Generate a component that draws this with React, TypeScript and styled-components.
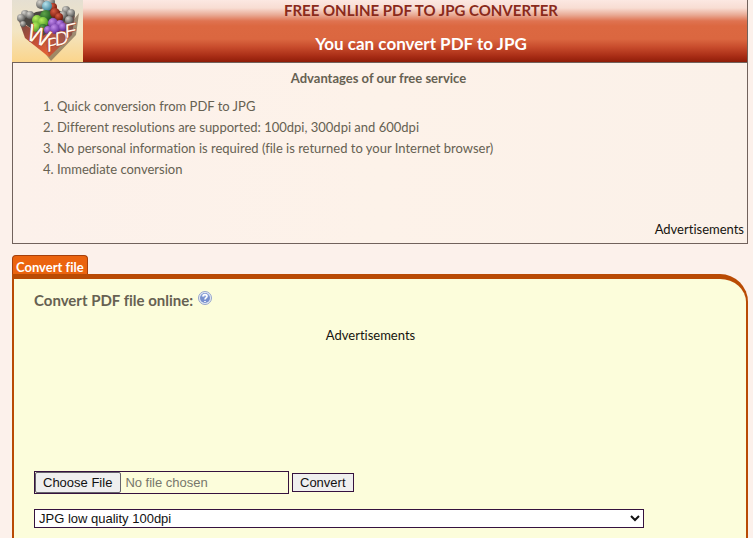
import React from "react";
import styled, { createGlobalStyle } from "styled-components";

const humanist = `"Trebuchet MS", Lato, "Noto Sans", sans-serif`;
const plain = `Arial, "Liberation Sans", sans-serif`;

const GlobalStyle = createGlobalStyle`
  * { box-sizing: border-box; }
  body {
    margin: 0;
    background: #fcf1eb;
    color: #666152;
    font: 13px/20px ${humanist};
    font-variant-ligatures: none;
  }
`;

const Page = styled.div`
  display: flex;
  flex-direction: column;
  min-height: 100vh;
  padding: 0 5px 0 12px;
`;

const Intro = styled.section`
  height: 244px;
  display: flex;
  flex-direction: column;
  background: linear-gradient(90deg, #fcf1eb, #fdf2e9 50%, #fbf1e9);
  border-right: 1px solid #71625c;
  border-bottom: 1px solid #71625c;
`;

const Banner = styled.header`
  display: grid;
  grid-template-columns: 71px 1fr;
  height: 63px;
  border-bottom: 1px solid #71625c;
`;

const LogoLink = styled.a`
  display: block;
  height: 62px;
  overflow: hidden;
`;

const Titles = styled.div`
  text-align: center;
  background: linear-gradient(
    #fce8e2 0px, #f8ddd3 8px, #e9aa95 15px, #df7351 21px,
    #dc6841 26px, #db6740 39px, #c84c2c 47px, #a92d16 56px, #8f1d08 62px
  );
`;

const Title = styled.h1`
  margin: 0;
  padding-left: 12px;
  color: #8a2a1b;
  font-size: 15px;
  font-weight: 700;
  line-height: 20px;
`;

const Subtitle = styled.h2`
  margin: 0;
  padding: 14px 0 0 12px;
  color: #fff;
  font-size: 17px;
  font-weight: 700;
  line-height: 20px;
`;

const Benefits = styled.div`
  flex: 1;
  display: flex;
  flex-direction: column;
  padding: 5px 3px 4px 0;
  border-left: 1px solid #71625c;
`;

const BenefitsTitle = styled.h3`
  margin: 0;
  font-size: 13px;
  font-weight: 700;
  line-height: 20px;
  text-align: center;
`;

const BenefitsList = styled.ol`
  margin: 8px 0 0;
  padding-left: 44px;
  line-height: 21px;
`;

const AdLabel = styled.div<{ $align: "right" | "center" }>`
  margin-top: ${(p) => (p.$align === "right" ? "auto" : "0")};
  color: #16140f;
  text-align: ${(p) => p.$align};
`;

const TabBar = styled.nav`
  display: flex;
  margin-top: 11px;
`;

const Tab = styled.a`
  height: 19px;
  padding: 0 3px;
  border: 1px solid #a5400c;
  border-bottom: 0;
  border-radius: 4px 4px 0 0;
  background: #eb640f;
  color: #fff;
  font-size: 13px;
  font-weight: 700;
  line-height: 22px;
  text-decoration: none;
`;

const Panel = styled.main`
  flex: 1;
  padding: 10px 19px 10px 20px;
  border: 2px solid #b94b04;
  border-top-width: 5px;
  border-bottom: 0;
  border-top-right-radius: 28px;
  background: #fcfddb;
`;

const FormTitle = styled.h3`
  display: flex;
  align-items: center;
  gap: 5px;
  margin: 0;
  font-size: 15px;
  font-weight: 700;
  line-height: 22px;
`;

const HelpButton = styled.button`
  display: flex;
  padding: 0 0 4px;
  border: 0;
  background: none;
`;

const AdSpace = styled.aside`
  height: 160px;
  padding: 14px 20px 0 0;
`;

const UploadRow = styled.div`
  display: flex;
  align-items: center;
  gap: 3px;
`;

const FileField = styled.input`
  width: 255px;
  height: 23px;
  border: 1px solid #35123f;
  color: #77776b;
  font: 13px/19px ${plain};

  &::file-selector-button {
    height: 21px;
    margin: 0 4px 0 0;
    padding: 0 8px 0 7px;
    border: 1px solid #66636b;
    border-radius: 2px;
    background: #efefef;
    color: #111;
    font: 13px/19px ${plain};
  }
`;

const ConvertButton = styled.button`
  height: 19px;
  padding: 0 7px;
  border: 1px solid #35123f;
  background: #efefef;
  color: #111;
  font: 13px/17px ${plain};
`;

const QualitySelect = styled.select`
  display: block;
  width: 91%;
  max-width: 610px;
  height: 19px;
  margin-top: 15px;
  padding: 0;
  border: 1px solid #35123f;
  border-radius: 0;
  background: #fff;
  color: #111;
  font: 13px/17px ${plain};
`;

type Ball = [x: number, y: number, r: number, hue: "grey" | "blue" | "green" | "lime" | "red" | "purple"];

const balls: Ball[] = [
  [13, 14, 4, "grey"], [9, 18, 4, "grey"], [18, 15, 4, "grey"], [11, 24, 3, "grey"],
  [29, 4, 5, "grey"], [38, 2, 5, "grey"], [41, 7, 4, "red"], [35, 6, 5, "blue"],
  [54, 10, 4, "grey"], [59, 13, 4, "grey"], [51, 15, 4, "grey"], [57, 20, 4, "grey"],
  [34, 16, 6, "green"], [43, 13, 5, "red"], [47, 17, 4, "red"],
  [25, 20, 5, "lime"], [31, 22, 5, "lime"], [24, 27, 5, "lime"], [31, 28, 4, "green"],
  [41, 23, 5, "purple"], [48, 24, 4, "purple"], [36, 30, 4, "purple"], [43, 29, 5, "purple"], [51, 27, 4, "purple"],
];

const hues = {
  grey: ["#d4d2cd", "#50504e"],
  blue: ["#b8e3ed", "#387f97"],
  green: ["#5da348", "#174d1c"],
  lime: ["#baf060", "#479522"],
  red: ["#d95b42", "#671407"],
  purple: ["#c18be9", "#5c2496"],
};

function Logo() {
  return (
    <svg width="71" height="62" viewBox="0 0 71 62" role="img" aria-label="WPDF">
      <defs>
        <linearGradient id="sky" x1="0" y1="0" x2="0" y2="1">
          <stop offset="0" stopColor="#e5dfd2" />
          <stop offset=".5" stopColor="#f3e5c3" />
          <stop offset="1" stopColor="#fbd58b" />
        </linearGradient>
        <linearGradient id="leftFace" x1="0" y1="0" x2="1" y2="1">
          <stop offset="0" stopColor="#684943" />
          <stop offset=".5" stopColor="#be4d38" />
          <stop offset="1" stopColor="#e66335" />
        </linearGradient>
        <linearGradient id="rightFace" x1="1" y1="0" x2="0" y2="1">
          <stop offset="0" stopColor="#624f4b" />
          <stop offset=".5" stopColor="#a65748" />
          <stop offset="1" stopColor="#dd5029" />
        </linearGradient>
        {Object.entries(hues).map(([name, [light, dark]]) => (
          <radialGradient key={name} id={name} cx=".35" cy=".3" r=".75">
            <stop offset="0" stopColor={light} />
            <stop offset="1" stopColor={dark} />
          </radialGradient>
        ))}
      </defs>
      <rect width="71" height="62" fill="url(#sky)" />
      <path d="M11 25 39 61 64 35 67 13 44 42Z" fill="#70604a" opacity=".65" />
      <path d="M8 20 24 12 42 9 62 16 37 43Z" fill="#4b4641" />
      <path d="M7 21 31 36 37 57 13 38Z" fill="url(#leftFace)" />
      <path d="M31 36 63 15 60 35 37 57Z" fill="url(#rightFace)" />
      {balls.map(([x, y, r, hue]) => (
        <circle key={`${x}-${y}`} cx={x} cy={y} r={r} fill={`url(#${hue})`} />
      ))}
      <g fill="#fff8ed" stroke="#a8402f" strokeWidth="1" paintOrder="stroke" fontFamily="Liberation Sans, Arial, sans-serif">
        <text x="13" y="39" fontSize="24" transform="rotate(22 13 39)">W</text>
        <g fontSize="19" fontStyle="italic">
          <text x="36" y="52" transform="rotate(-12 36 52)">P</text>
          <text x="44" y="46" transform="rotate(-12 44 46)">D</text>
          <text x="54" y="38" transform="rotate(-12 54 38)">F</text>
        </g>
      </g>
    </svg>
  );
}

function HelpIcon() {
  return (
    <svg width="14" height="14" viewBox="0 0 14 14" aria-hidden="true">
      <circle cx="7" cy="7" r="6.5" fill="#e4ebf4" stroke="#97a5cb" />
      <circle cx="7" cy="7" r="5" fill="#7890ce" />
      <path d="M3 5a4.5 4.5 0 0 1 8 0Q7 8 3 5" fill="#91a8dc" />
      <path d="M5 5.5C5 3 9 3 9 5.3 9 7 7 6.8 7 8.4M7 10v1" fill="none" stroke="#fff" strokeWidth="1.6" />
    </svg>
  );
}

const benefits = [
  "Quick conversion from PDF to JPG",
  "Different resolutions are supported: 100dpi, 300dpi and 600dpi",
  "No personal information is required (file is returned to your Internet browser)",
  "Immediate conversion",
];

export default function App() {
  return (
    <>
      <GlobalStyle />
      <Page>
        <Intro>
          <Banner>
            <LogoLink href="#"><Logo /></LogoLink>
            <Titles>
              <Title>FREE ONLINE PDF TO JPG CONVERTER</Title>
              <Subtitle>You can convert PDF to JPG</Subtitle>
            </Titles>
          </Banner>
          <Benefits>
            <BenefitsTitle>Advantages of our free service</BenefitsTitle>
            <BenefitsList>
              {benefits.map((text) => <li key={text}>{text}</li>)}
            </BenefitsList>
            <AdLabel $align="right">Advertisements</AdLabel>
          </Benefits>
        </Intro>
        <TabBar><Tab href="#convert">Convert file</Tab></TabBar>
        <Panel id="convert">
          <FormTitle>
            <label htmlFor="pdf">Convert PDF file online:</label>
            <HelpButton type="button" aria-label="Help"><HelpIcon /></HelpButton>
          </FormTitle>
          <AdSpace><AdLabel $align="center">Advertisements</AdLabel></AdSpace>
          <form onSubmit={(e) => e.preventDefault()}>
            <UploadRow>
              <FileField id="pdf" type="file" accept="application/pdf" />
              <ConvertButton type="submit">Convert</ConvertButton>
            </UploadRow>
            <QualitySelect aria-label="JPG quality" defaultValue="100">
              <option value="100">JPG low quality 100dpi</option>
              <option value="300">JPG medium quality 300dpi</option>
              <option value="600">JPG high quality 600dpi</option>
            </QualitySelect>
          </form>
        </Panel>
      </Page>
    </>
  );
}
